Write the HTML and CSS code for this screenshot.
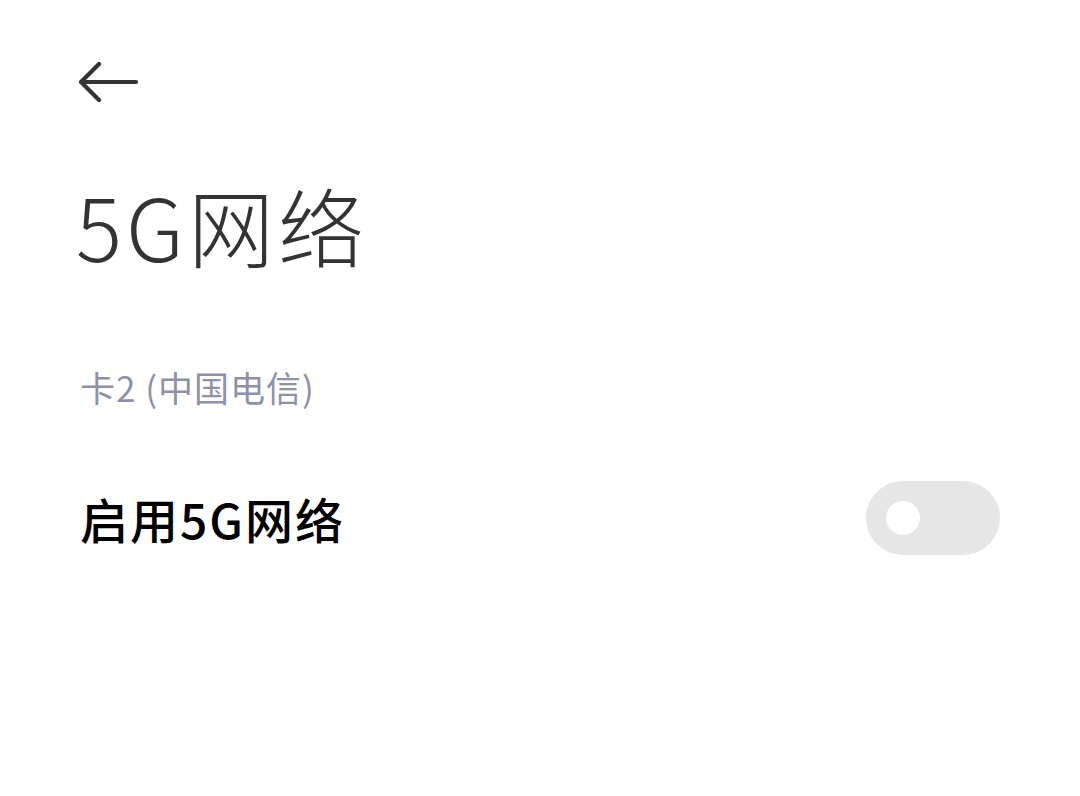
FILE: index.html
```html
<!DOCTYPE html>
<html lang="zh">
<head>
<meta charset="utf-8">
<link rel="stylesheet" href="styles.css">
</head>
<body>
<div class="page">
  <div class="topbar">
    <svg class="back" width="60" height="42" viewBox="0 0 60 42">
      <path d="M20 3 L2 21 L20 39 M2 21 H57" fill="none" stroke="#333" stroke-width="4.2" stroke-linecap="round" stroke-linejoin="round"/>
    </svg>
  </div>
  <h1 class="title">5G网络</h1>
  <div class="section">卡2 (中国电信)</div>
  <div class="row">
    <div class="label">启用5G网络</div>
    <div class="toggle"><div class="knob"></div></div>
  </div>
</div>
</body>
</html>
```
FILE: styles.css
```css
html, body {
  margin: 0;
  padding: 0;
  background: #ffffff;
}
.page {
  width: 1080px;
  height: 796px;
  font-family: "Noto Sans CJK SC", "Noto Sans", sans-serif;
  box-sizing: border-box;
  padding: 0 80px 0 79px;
}
.topbar {
  padding-top: 61px;
  height: 42px;
}
.back {
  display: block;
}
.title {
  margin: 62px 0 0 -3px;
  font-size: 86px;
  font-weight: 300;
  color: #333333;
  line-height: 120px;
  letter-spacing: 4px;
}
.section {
  margin-top: 78px;
  margin-left: 1px;
  font-size: 35px;
  color: #8d92a8;
  line-height: 48px;
  letter-spacing: 1px;
}
.row {
  margin-top: 70px;
  display: flex;
  align-items: center;
  justify-content: space-between;
}
.label {
  margin-left: 1px;
  font-size: 48px;
  font-weight: 500;
  color: #000000;
  line-height: 74px;
  letter-spacing: 2px;
}
.toggle {
  width: 134px;
  height: 74px;
  border-radius: 37px;
  background: #e6e6e6;
  display: flex;
  align-items: center;
  padding-left: 20px;
  box-sizing: border-box;
}
.knob {
  width: 34px;
  height: 34px;
  border-radius: 50%;
  background: #ffffff;
}
```
